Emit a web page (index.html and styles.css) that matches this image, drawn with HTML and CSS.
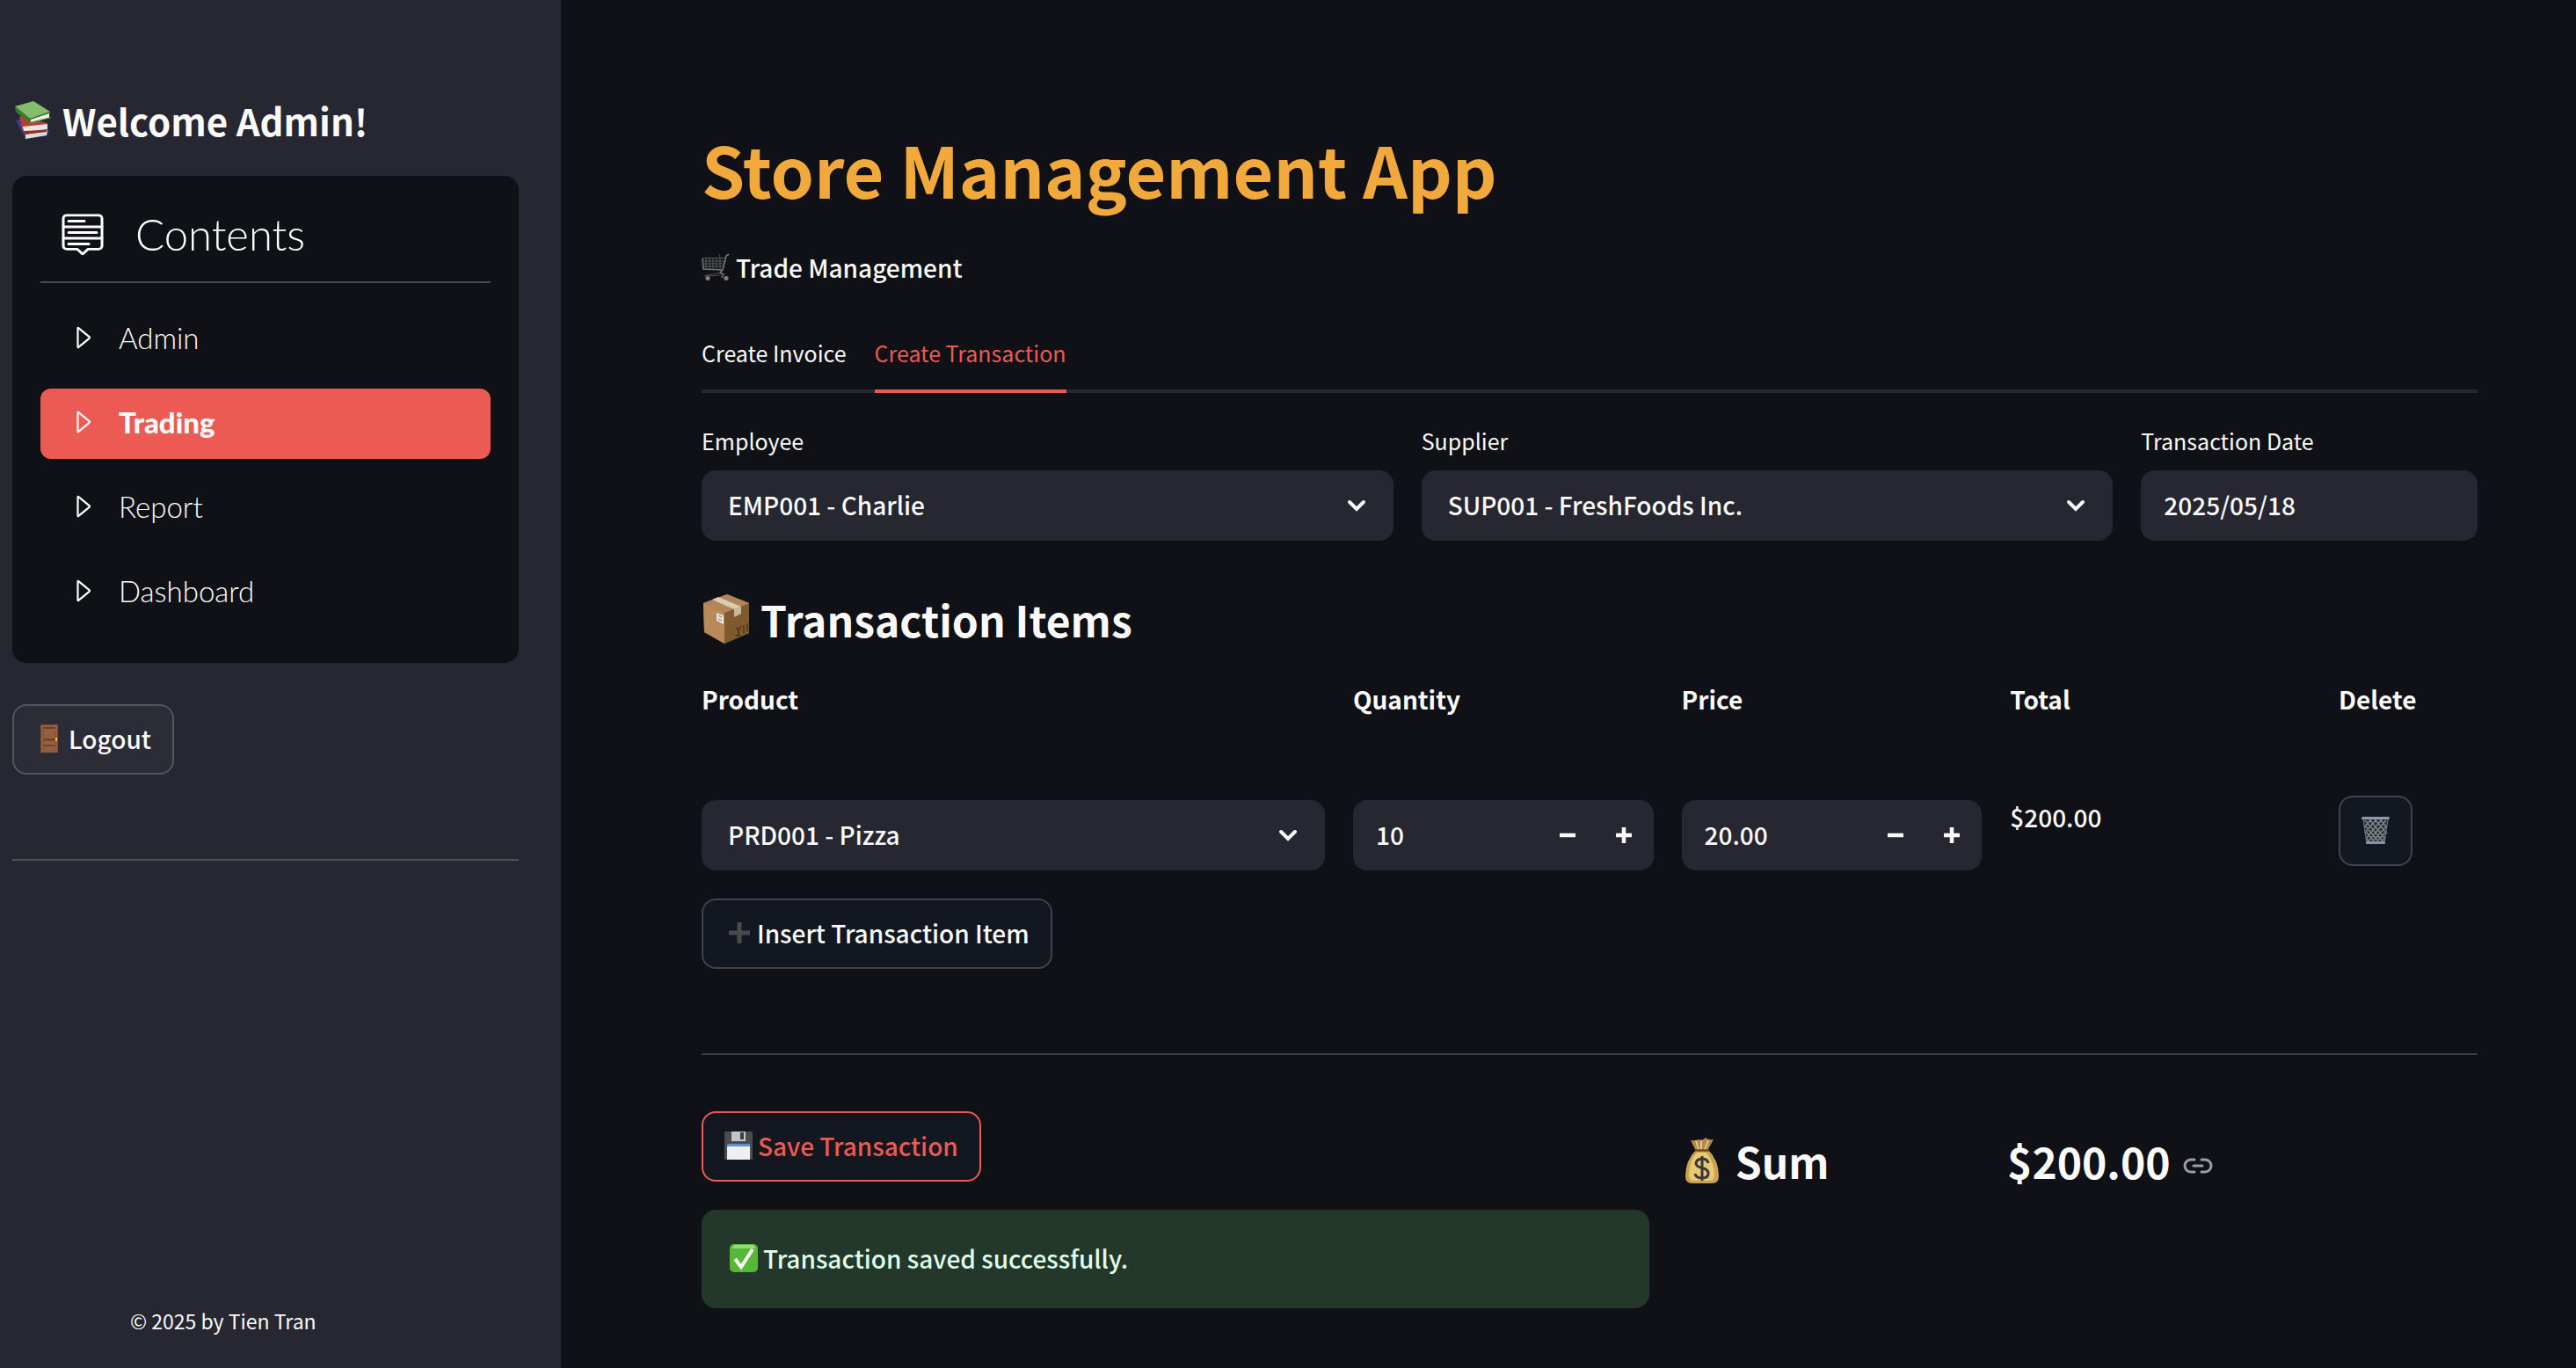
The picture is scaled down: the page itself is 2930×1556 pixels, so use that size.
FILE: index.html
```
<!DOCTYPE html>
<html lang="en">
<head>
<meta charset="utf-8">
<meta name="viewport" content="width=device-width, initial-scale=1">
<title>Store Management App</title>
<link rel="stylesheet" href="styles.css">
</head>
<body>
<aside class="sidebar">
  <h2 class="welcome">
    <svg width="44" height="44" viewBox="0 0 44 44" aria-hidden="true">
      <path d="M2 22l10-3 28 14-2 6-25 4z" fill="#2a4598"/>
      <path d="M13 38l25-5-1 6-24 4z" fill="#dcdcd8"/>
      <path d="M6 17l32 8-2 5-27 2z" fill="#c2392e"/>
      <path d="M10 29l28-3v6l-27 3z" fill="#e9e6e0"/>
      <path d="M10 34l27-1v2l-26 3z" fill="#9d2a22"/>
      <path d="M1 6L22 0l19 12-23 8z" fill="#86bd6a"/>
      <path d="M1 6l17 14v6L2 12z" fill="#3c7a31"/>
      <path d="M18 20l23-8v2l-21 8z" fill="#3c7a31"/>
      <path d="M19 21l21-7v5l-21 6z" fill="#f1efea"/>
      <path d="M18 24l24-6v1l-24 7z" fill="#4b8c3c"/>
    </svg>
    Welcome Admin!
  </h2>
  <nav class="menu" aria-label="Contents">
    <div class="menu-title">
      <svg width="48" height="48" viewBox="0 0 48 48" fill="none" stroke="#fff" stroke-width="3" stroke-linecap="round" stroke-linejoin="round" aria-hidden="true">
        <path d="M6 3h36a4 4 0 0 1 4 4v34a4 4 0 0 1-4 4H30l-6 6-6-6H6a4 4 0 0 1-4-4V7a4 4 0 0 1 4-4z" transform="translate(0 0) scale(1 .92)"/>
        <path d="M2 16h44M2 29h44M8 9.500h18M8 22.500h32M8 35.500h23"/>
      </svg>
      <span>Contents</span>
    </div>
    <ul class="menu-list">
      <li><a class="menu-link" href="#admin"><svg class="caret" viewBox="0 0 16 24"><path d="M2 2.200v19.600q0 1 .8.300L14 12.800q.8-.8 0-1.600L2.800 1.900Q2 1.200 2 2.200z"/></svg>Admin</a></li>
      <li><a class="menu-link active" href="#trading" aria-current="page"><svg class="caret" viewBox="0 0 16 24"><path d="M2 2.200v19.600q0 1 .8.300L14 12.800q.8-.8 0-1.600L2.800 1.900Q2 1.200 2 2.200z"/></svg>Trading</a></li>
      <li><a class="menu-link" href="#report"><svg class="caret" viewBox="0 0 16 24"><path d="M2 2.200v19.600q0 1 .8.300L14 12.800q.8-.8 0-1.600L2.800 1.900Q2 1.200 2 2.200z"/></svg>Report</a></li>
      <li><a class="menu-link" href="#dashboard"><svg class="caret" viewBox="0 0 16 24"><path d="M2 2.200v19.600q0 1 .8.300L14 12.800q.8-.8 0-1.600L2.800 1.900Q2 1.200 2 2.200z"/></svg>Dashboard</a></li>
    </ul>
  </nav>
  <button class="btn btn-logout" type="button">
    <svg width="20" height="32" viewBox="0 0 20 32" aria-hidden="true">
      <rect width="20" height="32" fill="#7b4a30"/>
      <rect x="1" y="1" width="18" height="31" fill="#96603f"/>
      <path d="M3 4h14M3 17.500h14M3 24h14" stroke="#5f3621" stroke-width="1.500"/>
      <path d="M3 5v10.500h14V5M3 19v4h14v-4M3 26v4h14v-4" fill="none" stroke="#83523a"/>
      <rect x="17" y="15" width="2" height="4" fill="#e8bd3c"/>
    </svg>
    Logout
  </button>
  <hr class="side-rule">
  <footer class="footer">© 2025 by Tien Tran</footer>
</aside>

<main class="main">
  <h1 class="title">Store Management App</h1>
  <p class="subtitle">
    <svg width="32" height="32" viewBox="0 0 32 32" fill="none" stroke="#77777a" aria-hidden="true">
      <path d="M31 1l-3 2-4 16-3 3 4 2-2 4M1 6l1 12 21 1" stroke-width="1.600"/>
      <path d="M1 5.500h26M1 9h25M1.500 12h24M2 15h22.500M5 5v13M9 5v13M13 5v13.500M17 5v13.500M21 5v13.500" stroke="#5c5c5f"/>
      <path d="M20 1l1 4M3 26l22-1M3 25.500l18-3" stroke="#4b4b4e"/>
      <circle cx="7" cy="28.500" r="2.200" fill="#91857d"/><circle cx="28" cy="28.500" r="2.200" fill="#91857d"/>
    </svg>
    Trade Management
  </p>

  <div class="tabs" role="tablist">
    <button class="tab" type="button" role="tab" aria-selected="false">Create Invoice</button>
    <button class="tab active" type="button" role="tab" aria-selected="true">Create Transaction</button>
  </div>

  <form class="panel">
    <div class="fields">
      <div class="field wide">
        <label for="employee">Employee</label>
        <div class="select-box">
          <select id="employee"><option>EMP001 - Charlie</option></select>
          <svg class="chevron" viewBox="0 0 22 14" aria-hidden="true"><path d="M3 3l8 8 8-8"/></svg>
        </div>
      </div>
      <div class="field wide">
        <label for="supplier">Supplier</label>
        <div class="select-box">
          <select id="supplier"><option>SUP001 - FreshFoods Inc.</option></select>
          <svg class="chevron" viewBox="0 0 22 14" aria-hidden="true"><path d="M3 3l8 8 8-8"/></svg>
        </div>
      </div>
      <div class="field">
        <label for="date">Transaction Date</label>
        <input class="text-input" id="date" type="text" value="2025/05/18">
      </div>
    </div>

    <h2 class="section-title">
      <svg width="56" height="58" viewBox="0 0 56 58" aria-hidden="true">
        <path d="M2 11L29 1l25 10v34L26 57 3 44z" fill="#a77b4e"/>
        <path d="M2 11l24 11v35L3 44z" fill="#b98a58"/>
        <path d="M26 22l28-11v34L26 57z" fill="#81592f"/>
        <path d="M2 11L29 1l25 10-28 11z" fill="#b0855a"/>
        <path d="M12 7l7-3 26 11-8 3z" fill="#dccbb0"/>
        <path d="M37 18l8-3v8l-8 4z" fill="#cbb695"/>
        <path d="M17 22l8 3v10l-8-4z" fill="#e9e4da"/>
        <path d="M19 25l4 2M19 29l4 2" stroke="#777" stroke-width="1"/>
        <path d="M39 39q3 4 6-2M42 39v8l-3 1h6M48 36v9M52 34v9" fill="none" stroke="#4f351b" stroke-width="1.500"/>
      </svg>
      Transaction Items
    </h2>

    <table class="items">
      <thead>
        <tr><th class="c4" scope="col">Product</th><th class="c2" scope="col">Quantity</th><th class="c2" scope="col">Price</th><th class="c2" scope="col">Total</th><th class="c1" scope="col">Delete</th></tr>
      </thead>
      <tbody>
        <tr>
          <td class="c4 low">
            <div class="select-box">
              <select aria-label="Product"><option>PRD001 - Pizza</option></select>
              <svg class="chevron" viewBox="0 0 22 14" aria-hidden="true"><path d="M3 3l8 8 8-8"/></svg>
            </div>
          </td>
          <td class="c2 low">
            <div class="number-box">
              <input type="text" inputmode="numeric" aria-label="Quantity" value="10">
              <button type="button" aria-label="Decrease quantity"><svg viewBox="0 0 16 16"><path d="M0 8h16"/></svg></button>
              <button type="button" aria-label="Increase quantity"><svg viewBox="0 0 16 16"><path d="M0 8h16M8 0v16"/></svg></button>
            </div>
          </td>
          <td class="c2 low">
            <div class="number-box">
              <input type="text" inputmode="decimal" aria-label="Price" value="20.00">
              <button type="button" aria-label="Decrease price"><svg viewBox="0 0 16 16"><path d="M0 8h16"/></svg></button>
              <button type="button" aria-label="Increase price"><svg viewBox="0 0 16 16"><path d="M0 8h16M8 0v16"/></svg></button>
            </div>
          </td>
          <td class="c2">$200.00</td>
          <td class="c1">
            <button class="btn btn-icon" type="button" aria-label="Delete item">
              <svg width="32" height="32" viewBox="0 0 32 32" aria-hidden="true">
                <path d="M2 2h28l-4 28H6z" fill="#2c3036"/>
                <path d="M4 4l22 26M9 3l18 22M15 3l14 16M21 3l8 9M4 10l17 20M5 17l11 13M5 24l5 6M28 4L6 30M23 3L5 25M17 3L4 18M11 3L3 12M28 11L11 30M27 18L16 30M26 25l-5 5" stroke="#858a91" stroke-width="1.200"/>
                <path d="M2 3l4 27M30 3l-4 27" stroke="#6d7278" stroke-width="1.200"/>
                <rect x="0" y="0" width="32" height="3" rx="1.500" fill="#8e99ad"/>
                <rect x="5" y="28" width="22" height="3" rx="1" fill="#8794a6"/>
              </svg>
            </button>
          </td>
        </tr>
      </tbody>
    </table>

    <button class="btn btn-insert" type="button">
      <svg width="24" height="24" viewBox="0 0 24 24" aria-hidden="true"><path d="M0 12h24M12 0v24" stroke="#4a4a4c" stroke-width="5"/></svg>
      Insert Transaction Item
    </button>

    <hr class="main-rule">

    <div class="summary">
      <div class="summary-actions">
        <button class="btn btn-save" type="button">
          <svg width="32" height="32" viewBox="0 0 32 32" aria-hidden="true">
            <rect width="32" height="32" rx="1" fill="#4b4c4f"/>
            <rect x="8" y="0" width="16" height="11" fill="#c3c4c7"/>
            <rect x="18" y="1" width="4" height="8" fill="#3e3f42"/>
            <rect x="3" y="14" width="26" height="18" fill="#efeff1"/>
            <rect x="3" y="14" width="26" height="3" fill="#5b8fd0"/>
          </svg>
          Save Transaction
        </button>
        <div class="success" role="status">
          <svg width="32" height="32" viewBox="0 0 32 32" aria-hidden="true">
            <rect width="32" height="32" rx="5" fill="#56b836"/>
            <path d="M3 4q1-3 4-3h18q3 0 4 3v1H3z" fill="#93dc7c"/>
            <path d="M6 17l7 9L26 6" fill="none" stroke="#fff" stroke-width="4"/>
          </svg>
          Transaction saved successfully.
        </div>
      </div>
      <h2 class="sum-label">
        <svg width="40" height="52" viewBox="0 0 40 52" aria-hidden="true">
          <path d="M7 3q6 1 9-1 4 2 8-2 3 3 9 2l-7 13H13z" fill="#b28a48"/>
          <path d="M13 3l3 11M19 3v11M27 3l-4 11" stroke="#e2c78b" stroke-width="2"/>
          <path d="M13 14h14q12 12 12 30 0 8-8 8H9q-8 0-8-8 0-18 12-30z" fill="#caa250"/>
          <path d="M14 17h11q9 12 9 26 0 6-7 6H12q-7 0-7-6 0-16 9-26z" fill="#e6c975"/>
          <path d="M12 14.500h16" stroke="#6f4a1f" stroke-width="2.500"/>
          <path d="M27 29q-1-5-7-5t-7 5q0 4 7 5.500t7 6q0 5.500-7 5.500t-8-5M20 21v28" fill="none" stroke="#3c3835" stroke-width="3"/>
        </svg>
        Sum
      </h2>
      <h2 class="sum-value">
        $200.00
        <a class="anchor" href="#sum" aria-label="Link to this heading">
          <svg width="34" height="18" viewBox="0 0 34 18" fill="none" stroke="#9c9da1" stroke-width="3" stroke-linecap="round"><path d="M13 2H9a7 7 0 0 0 0 14h4M21 2h4a7 7 0 0 1 0 14h-4M12 9h10"/></svg>
        </a>
      </h2>
    </div>
  </form>
</main>
</body>
</html>
```

FILE: styles.css
```
* { box-sizing: border-box; }

body {
  margin: 0;
  min-height: 100vh;
  display: flex;
  background: #0f1116;
  color: #fafafa;
  font-family: "Noto Sans CJK SC", "Noto Sans", sans-serif;
  font-size: 28px;
  font-weight: 500;
  line-height: 48px;
}

h1, h2, p, ul { margin: 0; padding: 0; }
svg { flex: none; }
hr { width: 100%; height: 2px; margin: 0; border: 0; }

button, input, select {
  margin: 0;
  padding: 0;
  border: 0;
  background: none;
  color: inherit;
  font: inherit;
}

/* Sidebar */
.sidebar {
  flex: none;
  width: 638px;
  display: flex;
  flex-direction: column;
  align-items: flex-start;
  padding: 109px 48px 36px 14px;
  background: #262730;
}

.welcome {
  display: flex;
  align-items: center;
  gap: 11px;
  padding-left: 2px;
  margin-bottom: 35px;
  font-size: 42px;
  font-weight: 700;
  line-height: 56px;
}

.menu {
  width: 100%;
  padding: 32px 32px 40px;
  border-radius: 16px;
  background: #0f1116;
  color: #fff;
  font-family: Lato, "Open Sans", sans-serif;
  font-weight: 300;
}

.menu-title {
  display: flex;
  align-items: center;
  gap: 36px;
  padding: 2px 24px 22px;
  border-bottom: 2px solid #4a4b50;
  font-size: 49px;
  line-height: 64px;
}

.menu-list {
  display: grid;
  gap: 16px;
  padding-top: 24px;
  list-style: none;
}

.menu-link {
  display: flex;
  align-items: center;
  gap: 31px;
  height: 80px;
  padding: 0 40px 4px;
  border-radius: 12px;
  color: #fff;
  font-size: 33px;
  text-decoration: none;
}

.menu-link.active { background: #eb5a53; font-weight: 900; }

.caret {
  width: 18px;
  height: 26px;
  fill: none;
  stroke: #fff;
  stroke-width: 2;
}

.side-rule { margin-top: 96px; background: #4f5058; }

.footer {
  margin-top: auto;
  padding-left: 134px;
  font-size: 23px;
  font-weight: 400;
  line-height: 36px;
}

/* Buttons */
.btn {
  display: inline-flex;
  align-items: center;
  height: 80px;
  border: 2px solid #41434a;
  border-radius: 16px;
  background: #131720;
  white-space: nowrap;
}

.btn-logout {
  gap: 12px;
  margin-top: 47px;
  padding: 0 24px 3px 30px;
  border-color: #53545c;
  background: #2b2c36;
}

.btn-insert { gap: 8px; padding: 0 24px 3px 29px; margin-top: 32px; }
.btn-icon { justify-content: center; width: 84px; }
.btn-save { gap: 6px; padding: 0 24px 3px; border-color: #eb5a53; color: #eb5a53; }

/* Main area */
.main {
  flex: 1;
  min-width: 0;
  padding: 144px 112px 64px 160px;
}

.title {
  color: #f2a93b;
  font-size: 79px;
  font-weight: 700;
  line-height: 96px;
}

.subtitle {
  display: flex;
  align-items: center;
  gap: 7px;
  margin-top: 40px;
}

.tabs {
  display: flex;
  gap: 32px;
  margin-top: 32px;
  box-shadow: inset 0 -4px #262730;
}

.tab {
  height: 87px;
  padding-bottom: 2px;
  border-bottom: 4px solid transparent;
  font-size: 25px;
  font-weight: 400;
}

.tab.active { border-color: #eb5a53; color: #eb5a53; }

.panel { padding-top: 32px; }
.fields { display: flex; gap: 32px; }
.field { flex: 1 1 calc(20% - 32px); min-width: 0; }
.field.wide { flex-basis: calc(40% - 32px); }

.field label {
  display: block;
  margin-bottom: 12px;
  font-size: 25px;
  font-weight: 400;
  line-height: 44px;
}

.select-box { position: relative; }

.select-box select {
  display: block;
  width: 100%;
  height: 80px;
  padding: 0 80px 2px 30px;
  border-radius: 16px;
  background: #262730;
  appearance: none;
}

.chevron {
  position: absolute;
  top: 33px;
  right: 31px;
  width: 22px;
  height: 14px;
  fill: none;
  stroke: #fafafa;
  stroke-width: 4;
  stroke-linecap: round;
  pointer-events: none;
}

.text-input {
  display: block;
  width: 100%;
  height: 80px;
  padding: 0 26px 2px;
  border-radius: 16px;
  background: #262730;
}

.number-box {
  display: flex;
  height: 80px;
  padding-right: 2px;
  border-radius: 16px;
  background: #262730;
}

.number-box input { flex: 1; min-width: 0; padding: 0 0 2px 26px; }

.number-box button {
  display: grid;
  place-items: center;
  width: 64px;
}

.number-box svg { width: 18px; height: 18px; stroke: #fafafa; stroke-width: 4; }

.section-title {
  display: flex;
  align-items: center;
  gap: 11px;
  margin-top: 57px;
  font-size: 48px;
  font-weight: 700;
  line-height: 64px;
}

.items { display: block; margin-top: 35px; }
.items thead, .items tbody { display: block; }
.items tr { display: flex; gap: 32px; }
.items tbody { margin-top: 86px; }
.items th, .items td { min-width: 0; padding: 0; text-align: left; }
.items th { font-weight: 700; }
.c4 { flex: 1 1 calc(400% / 11 - 32px); }
.c2 { flex: 1 1 calc(200% / 11 - 32px); }
.c1 { flex: 1 1 calc(100% / 11 - 32px); }
.items .low { padding-top: 5px; }
.items td { line-height: 48px; }

.main-rule { margin: 96px 0 64px; background: #3d3e44; }

.summary { display: flex; gap: 32px; align-items: flex-start; }
.summary-actions { flex: 0 1 calc(600% / 11 - 24px); }

.success {
  display: flex;
  align-items: center;
  gap: 6px;
  height: 112px;
  margin-top: 32px;
  padding: 0 32px 2px;
  border-radius: 16px;
  background: #23382b;
  color: #dffde9;
}

.sum-label, .sum-value {
  display: flex;
  align-items: center;
  padding-top: 24px;
  font-size: 48px;
  font-weight: 700;
  line-height: 64px;
}

.sum-label { flex: 0 1 calc(200% / 11 - 24px); gap: 18px; padding-left: 8px; }
.sum-value { flex: 1; gap: 14px; }
.anchor { display: flex; margin-top: 12px; }
```
